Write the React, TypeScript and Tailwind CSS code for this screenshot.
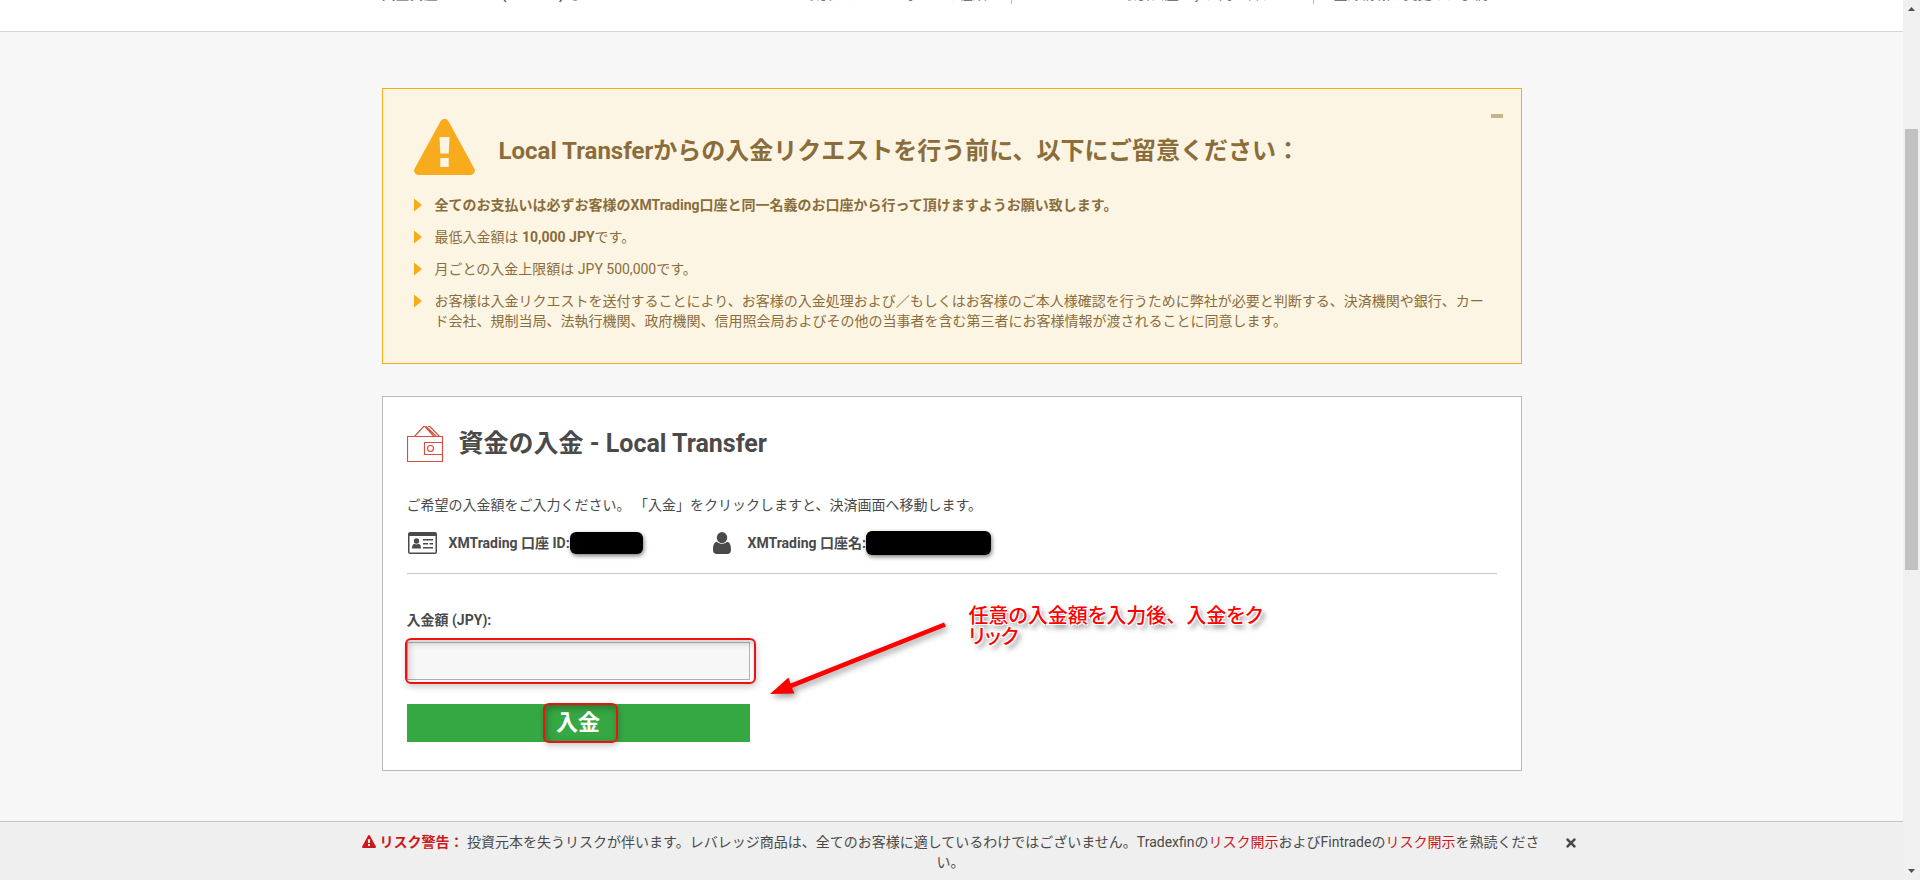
import React from "react";
import { FaTimes } from "react-icons/fa";

function Triangle({ className }: { className: string }) {
  return (
    <svg viewBox="0 0 61 56" className={className} fill="currentColor" aria-hidden="true">
      <path
        fillRule="evenodd"
        d="M26.5 2.2a4.6 4.6 0 0 1 8 0L60.3 49.500a4.300 4.300 0 0 1-3.800 6.500H4.500a4.300 4.300 0 0 1-3.800-6.500ZM25.500 18l.8 16.500h8.400L35.500 18ZM26.300 39v9h8.400v-9Z"
      />
    </svg>
  );
}

function WalletIcon() {
  return (
    <svg viewBox="0 0 37 38" className="h-[38px] w-[37px]" fill="none" stroke="#d2503f" strokeWidth="1.2" aria-hidden="true">
      <path d="M0.500 11.500H35.500V36.500H0.500ZM7.500 11.500L16.500 1.500H18L27 11.500M19 1.500L29.500 11.500M21 1.500H23L32.500 11.500" />
      <path d="M35.500 17.500H17.500V29.500H35.500" />
      <circle cx="23.500" cy="23.500" r="3" />
    </svg>
  );
}

function IdCardIcon() {
  return (
    <svg viewBox="0 0 29 22" className="h-[22px] w-[29px]" fill="#4a4a4a" aria-hidden="true">
      <path fillRule="evenodd" d="M2 0H27a2 2 0 0 1 2 2V20a2 2 0 0 1-2 2H2a2 2 0 0 1-2-2V2A2 2 0 0 1 2 0ZM1.500 4V20.500H27.500V4Z" />
      <circle cx="8.500" cy="9" r="2.700" />
      <path d="M4 16.500c0-3 1-4.500 2.500-4.700 1.200 1 2.800 1 4 0 1.500.2 2.500 1.700 2.500 4.700ZM15 7h10v1.500H15ZM15 11h5v1.500h-5ZM21.500 11H25v1.500h-3.500ZM15 15h10v1.500H15Z" />
    </svg>
  );
}

function PersonIcon() {
  return (
    <svg viewBox="0 0 18 22" className="h-[22px] w-[18px]" fill="#4a4a4a" aria-hidden="true">
      <ellipse cx="9" cy="5.600" rx="5.200" ry="5.600" />
      <path d="M4 9.800c-3 .4-4 3.600-4 8.200C0 20.500 1.500 22 3.500 22h11c2 0 3.500-1.500 3.500-4 0-4.600-1-7.800-4-8.200-2.800 2.700-7.200 2.700-10 0Z" />
    </svg>
  );
}

function Bullet({ children }: { children: React.ReactNode }) {
  return (
    <li className="flex items-start gap-[13px]">
      <svg viewBox="0 0 8 14" className="mt-[3px] h-[14px] w-2 shrink-0" fill="#f8ab1c" aria-hidden="true">
        <path d="M0 0.500L8 7L0 13.500Z" />
      </svg>
      <span>{children}</span>
    </li>
  );
}

export default function App() {
  return (
    <div className="flex h-screen overflow-hidden bg-[#f7f7f7] font-[Roboto,'Noto_Sans_CJK_JP',sans-serif] text-sm leading-5 text-[#4a4a4a]">
      <div className="flex min-w-0 flex-1 flex-col">
        <header className="h-8 shrink-0 overflow-hidden border-b border-[#d6d6d6] bg-white">
          <div className="mx-auto -mt-4 flex w-full max-w-[1140px] justify-between leading-5">
            <strong className="font-bold">入金口座 Standard (Trader 1) る</strong>
            <nav className="flex text-[#777777]">
              <a href="#funds" className="border-r border-[#b8b8b8] pr-6">取引プラットフォームの種類</a>
              <a href="#mypage" className="w-[302px] border-r border-[#b8b8b8] pr-6 text-right">取引口座 My お問い合わせ</a>
              <a href="#settings" className="w-[208px] pl-5">登録情報の変更とお手続き</a>
            </nav>
          </div>
        </header>

        <main className="mx-auto flex w-full max-w-[1140px] flex-1 flex-col gap-8 pt-14">
          <section className="relative border border-[#f8ab1c] bg-[#fdf5e3] px-[31px] pt-[30px] pb-8 text-[#8a6d3b]">
            <button type="button" aria-label="閉じる" className="absolute top-[25px] right-[18px] h-1 w-3 bg-[#c5b48e]" />
            <div className="flex items-end gap-6">
              <Triangle className="h-14 w-[61px] text-[#f8ab1c]" />
              <h2 className="pb-2 text-2xl leading-8 font-bold">Local Transferからの入金リクエストを行う前に、以下にご留意ください：</h2>
            </div>
            <ul className="mt-5 flex flex-col gap-3">
              <Bullet><strong className="font-bold">全てのお支払いは必ずお客様のXMTrading口座と同一名義のお口座から行って頂けますようお願い致します。</strong></Bullet>
              <Bullet>最低入金額は <strong>10,000 JPY</strong>です。</Bullet>
              <Bullet>月ごとの入金上限額は JPY 500,000です。</Bullet>
              <Bullet>お客様は入金リクエストを送付することにより、お客様の入金処理および／もしくはお客様のご本人様確認を行うために弊社が必要と判断する、決済機関や銀行、カード会社、規制当局、法執行機関、政府機関、信用照会局およびその他の当事者を含む第三者にお客様情報が渡されることに同意します。</Bullet>
            </ul>
          </section>

          <section className="relative border border-[#b9b9b9] bg-white px-6 pt-7 pb-7">
            <div className="flex items-center gap-[15px]">
              <WalletIcon />
              <h1 className="text-[25px] leading-9 font-bold">資金の入金 - Local Transfer</h1>
            </div>
            <p className="mt-8">ご希望の入金額をご入力ください。 「入金」をクリックしますと、決済画面へ移動します。</p>
            <div className="mt-4 flex h-6 items-center font-bold">
              <div className="flex w-[306px] items-center pl-px">
                <IdCardIcon />
                <span className="ml-3">XMTrading 口座 ID:</span>
                <span className="h-[22px] w-[73px] rounded-md bg-black shadow-[1px_2px_4px_rgba(0,0,0,0.5)]" />
              </div>
              <PersonIcon />
              <span className="ml-[17px]">XMTrading 口座名:</span>
              <span className="h-6 w-[125px] rounded-md bg-black shadow-[1px_2px_4px_rgba(0,0,0,0.5)]" />
            </div>
            <hr className="mt-[18px] border-[#c8c8c8]" />
            <form className="mt-9 w-[343px]" onSubmit={(e) => e.preventDefault()}>
              <label htmlFor="amount" className="block font-bold">入金額 (JPY):</label>
              <div className="relative mt-3">
                <input id="amount" type="text" className="block h-[38px] w-full border border-[#b3b3b3] bg-[#f7f7f7] px-3 outline-none" />
                <span className="pointer-events-none absolute -inset-y-1 -right-[6px] -left-[2px] rounded-md border-2 border-[#ee1111] shadow-[1px_3px_6px_rgba(0,0,0,0.2),inset_2px_3px_7px_rgba(0,0,0,0.2)]" />
              </div>
              <button type="submit" className="mt-6 flex h-[38px] w-full items-center justify-center bg-[#36a843] pl-1 text-[22px] font-bold text-white">
                <span className="flex h-[40px] w-[75px] shrink-0 items-center justify-center rounded-md border-2 border-[#ee1111] pr-1 shadow-[1px_3px_6px_rgba(0,0,0,0.2),inset_2px_3px_7px_rgba(0,0,0,0.3)]">入金</span>
              </button>
            </form>
            <svg viewBox="0 0 180 76" className="absolute top-[225px] left-[386px] h-[76px] w-[180px] drop-shadow-[2px_3px_3px_rgba(0,0,0,0.4)]" fill="#ff0000" aria-hidden="true">
              <path d="M175 0.500L177 4.500L23 66L25.500 71.500L1 72L19.500 55.500L21.500 61.500Z" />
            </svg>
            <p className="absolute top-[209px] left-[586px] w-[310px] text-xl leading-[21px] font-medium text-[#ff0000] [font-feature-settings:'palt'] [text-shadow:1px_1px_0_#fff,-1px_-1px_0_#fff,1px_-1px_0_#fff,-1px_1px_0_#fff,3px_4px_5px_rgba(0,0,0,0.5)]">
              任意の入金額を入力後<span className="[font-feature-settings:normal]">、</span>入金をク<br />リック
            </p>
          </section>
        </main>

        <footer className="flex h-[59px] shrink-0 items-start justify-center gap-[22px] border-t border-[#c6c6c6] bg-[#efefef] pt-[10px] pl-8">
          <p className="w-[1184px] text-center">
            <Triangle className="mr-1 inline h-[13px] w-[14px] align-[-1px] text-[#cd1719]" />
            <strong className="font-bold text-[#cd1719]">リスク警告： </strong>
            投資元本を失うリスクが伴います。レバレッジ商品は、全てのお客様に適しているわけではございません。Tradexfinの<a href="#risk" className="text-[#cd1719]">リスク開示</a>およびFintradeの<a href="#risk2" className="text-[#cd1719]">リスク開示</a>を熟読ください。
          </p>
          <button type="button" aria-label="閉じる" className="mt-1"><FaTimes className="h-[14px] w-3" /></button>
        </footer>
      </div>

      <div className="flex w-[17px] shrink-0 flex-col items-center bg-[#f0f0f0]" aria-hidden="true">
        <svg viewBox="0 0 17 17" className="h-[17px] w-[17px]" fill="#505050"><path d="M5 11L8.500 7L12 11Z" /></svg>
        <div className="mt-28 h-[441px] w-[13px] bg-[#c1c1c1]" />
        <svg viewBox="0 0 17 17" className="mt-auto h-[17px] w-[17px]" fill="#505050"><path d="M5 6L8.500 10L12 6Z" /></svg>
      </div>
    </div>
  );
}
